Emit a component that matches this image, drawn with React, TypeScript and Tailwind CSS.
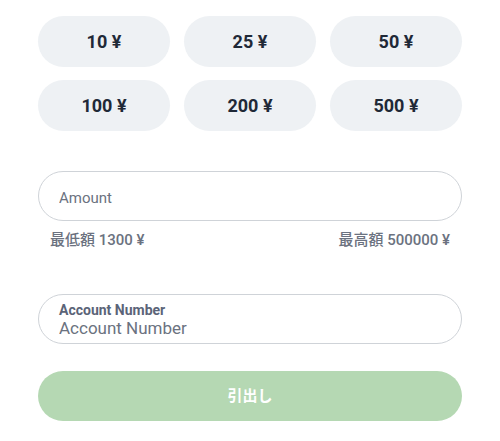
import { useState } from "react";

const presets = [10, 25, 50, 100, 200, 500];

function App() {
  const [amount, setAmount] = useState("");
  const [account, setAccount] = useState("");

  return (
    <main className="min-h-screen bg-white px-[38px] pt-[16px] font-['Roboto','Noto_Sans_CJK_JP',sans-serif]">
      <div className="grid grid-cols-3 gap-x-[14px] gap-y-[13px]">
        {presets.map((value) => (
          <button
            key={value}
            onClick={() => setAmount(String(value))}
            className="h-[51px] rounded-full bg-[#eef1f4] text-[18px] font-bold text-[#1f2937]"
          >
            {value} ¥
          </button>
        ))}
      </div>

      <div className="mt-[40px]">
        <input
          value={amount}
          onChange={(e) => setAmount(e.target.value)}
          placeholder="Amount"
          className="h-[50px] w-full rounded-full border border-[#cfd3d8] px-[20px] pt-[3px] text-[15px] text-[#1f2937] outline-none placeholder:text-[#6b7280]"
        />
        <div className="mt-[9px] flex justify-between px-[12px] text-[15px] leading-[20px] font-medium text-[#6b7280]">
          <span>最低額 1300 ¥</span>
          <span>最高額 500000 ¥</span>
        </div>
      </div>

      <label className="mt-[44px] flex h-[50px] flex-col justify-center rounded-full border border-[#cfd3d8] px-[20px] pt-[2px]">
        <span className="text-[14px] font-bold leading-[16px] text-[#5b6478]">Account Number</span>
        <input
          value={account}
          onChange={(e) => setAccount(e.target.value)}
          placeholder="Account Number"
          className="text-[17px] leading-[20px] text-[#1f2937] outline-none placeholder:text-[#6b7280]"
        />
      </label>

      <button
        disabled
        className="mt-[27px] h-[50px] w-full rounded-full bg-[#b5d8b3] text-[15px] font-bold text-white"
      >
        引出し
      </button>
    </main>
  );
}

export default App;
